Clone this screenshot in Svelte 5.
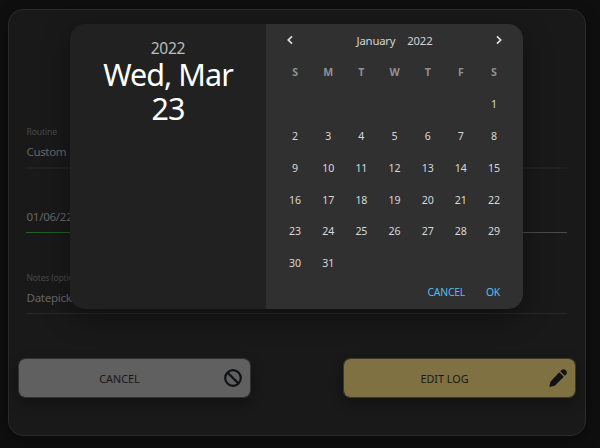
<script>
  const weekdays = ['S', 'M', 'T', 'W', 'T', 'F', 'S'];
  const days = [...Array(6).fill(''), ...Array.from({ length: 31 }, (_, i) => i + 1)];
</script>

<main class="page">
  <section class="card">
    <div class="field routine">
      <span class="label">Routine</span>
      <span class="value">Custom</span>
    </div>
    <div class="field date">
      <span class="value">01/06/22</span>
    </div>
    <div class="field notes">
      <span class="label">Notes (optional)</span>
      <span class="value">Datepicker</span>
    </div>
    <div class="actions">
      <button class="cancel">
        <span>CANCEL</span>
        <svg width="18" height="18" viewBox="0 0 18 18" fill="none" stroke="#111214" stroke-width="2.2">
          <circle cx="9" cy="9" r="7.8" /><path d="M3.6 3.6l10.8 10.8" />
        </svg>
      </button>
      <button class="edit">
        <span>EDIT LOG</span>
        <svg width="18" height="18" viewBox="0 0 18 18" fill="#111214">
          <path d="M10.3 3.2l4.5 4.5-8.3 8.2q-.8.8-2 1.1L.3 17.9l.9-4.2q.3-1.2 1.1-2z" />
          <path d="M11.2 2.3l1.4-1.3q2-1.7 3.8 0l.6.6q1.7 1.8 0 3.8l-1.3 1.4z" />
        </svg>
      </button>
    </div>
  </section>

  <div class="picker">
    <aside>
      <div class="year">2022</div>
      <div class="chosen">Wed, Mar<br />23</div>
    </aside>
    <div class="calendar">
      <header>
        <svg width="8" height="10" viewBox="0 0 8 10"><path d="M6 1.3L2.3 5 6 8.7" /></svg>
        <div class="month"><span>January</span><span>2022</span></div>
        <svg width="8" height="10" viewBox="0 0 8 10"><path d="M2 1.3L5.7 5 2 8.7" /></svg>
      </header>
      <div class="grid">
        {#each weekdays as d}<b>{d}</b>{/each}
        {#each days as d}<span>{d}</span>{/each}
      </div>
      <footer><span class="dismiss">CANCEL</span><span class="ok">OK</span></footer>
    </div>
  </div>
</main>

<style>
  :global(body) { margin: 0; background: #0f0f0f; }
  .page {
    position: relative;
    box-sizing: border-box;
    width: 600px;
    height: 448px;
    padding: 9px 0 0 8px;
    overflow: hidden;
    background: #0f0f0f;
    font-family: "Noto Sans", "Open Sans", sans-serif;
  }
  .card {
    box-sizing: border-box;
    width: 578px;
    height: 427px;
    padding: 116px 9px 0;
    border: 1px solid #2a2a2a;
    border-radius: 15px;
    background: #191919;
    box-shadow: 0 4px 14px rgba(0, 0, 0, 0.4);
  }
  .field {
    box-sizing: border-box;
    display: flex;
    flex-direction: column;
    justify-content: flex-end;
    width: 541px;
    margin-left: 8px;
    padding-left: 0.5px;
    white-space: nowrap;
  }
  .label { color: #484848; font-size: 8.6px; line-height: 12px; letter-spacing: -0.22px; }
  .value { color: #666; font-size: 11.6px; line-height: 18px; letter-spacing: -0.3px; margin-top: 5px; }
  .routine { height: 43px; padding-bottom: 6px; border-bottom: 2px solid #202020; }
  .routine .label { letter-spacing: -0.12px; }
  .routine .value { letter-spacing: -0.4px; }
  .date { height: 64px; padding-bottom: 7px; background: linear-gradient(90deg, #206020 50%, #4a4a4a 50%) bottom / 100% 1px no-repeat; }
  .notes { height: 81px; padding-bottom: 6px; border-bottom: 1px solid #292929; }
  .actions { display: flex; justify-content: space-between; margin-top: 44px; }
  button {
    box-sizing: border-box;
    display: flex;
    align-items: center;
    width: 233px;
    height: 40px;
    padding: 0 8px 0 0;
    border: 1px solid #303030;
    border-radius: 7px;
    background: #606060;
    background-clip: padding-box;
    color: #171717;
    font: 10.8px "Noto Sans", "Open Sans", sans-serif;
    box-shadow: 0 5px 13px rgba(0, 0, 0, 0.3);
  }
  button span { flex: 1; text-align: center; padding-right: 4px; }
  .edit { background-color: #807142; border-color: #3d3829; }
  .picker {
    position: absolute;
    left: 70px;
    top: 24px;
    display: flex;
    width: 453px;
    height: 285px;
    border-radius: 15px;
    overflow: hidden;
    box-shadow: 0 8px 28px rgba(0, 0, 0, 0.38);
  }
  aside { box-sizing: border-box; width: 196px; padding-top: 14px; background: #212121; text-align: center; }
  .year { color: #bcbcbc; font-size: 15.6px; line-height: 20px; letter-spacing: -0.3px; }
  .chosen { color: #fff; font-size: 30.5px; line-height: 33.5px; letter-spacing: -0.95px; }
  .calendar { box-sizing: border-box; width: 257px; padding: 0 12.5px; background: #303030; }
  header { display: flex; align-items: center; justify-content: space-between; height: 32px; padding: 0 7.5px; }
  header svg { fill: none; stroke: #e0e0e0; stroke-width: 1.7; }
  .month { display: flex; gap: 12px; padding-top: 2px; color: #d4d4d4; font-size: 11.3px; line-height: 16px; letter-spacing: -0.2px; }
  .grid { display: grid; grid-template-columns: repeat(7, 1fr); grid-auto-rows: 31.9px; color: #d8d8d8; font-size: 10.6px; line-height: 32px; letter-spacing: -0.1px; text-align: center; }
  .grid b { color: #909090; font-size: 10.6px; font-weight: 700; }
  footer { display: flex; justify-content: flex-end; gap: 21px; padding-right: 10.5px; color: #56bfec; font-size: 10.4px; line-height: 26px; letter-spacing: -0.25px; }
</style>
